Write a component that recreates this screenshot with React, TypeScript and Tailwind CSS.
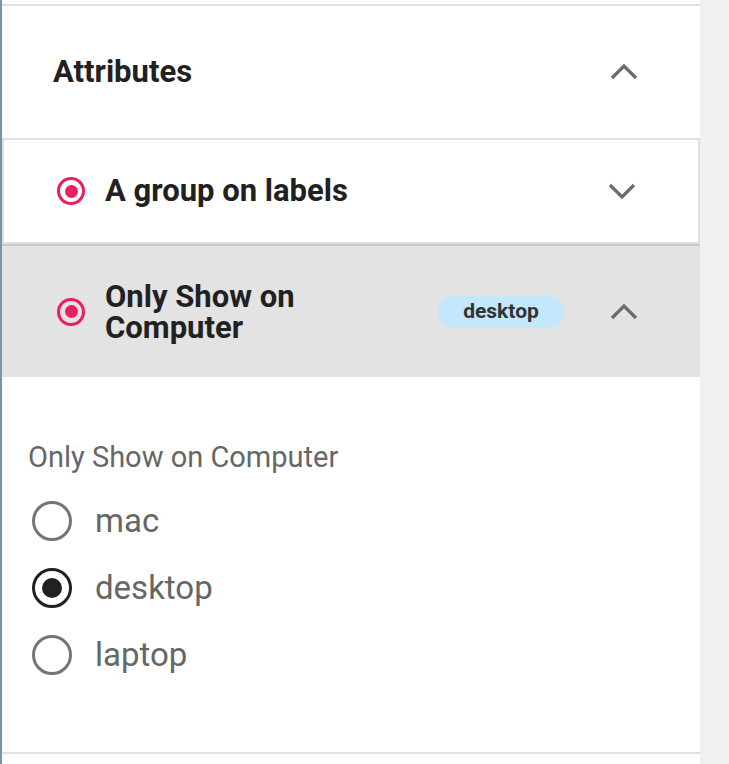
import React from 'react';

function Chevron({ up }: { up: boolean }) {
  return (
    <svg width="28" height="18" viewBox="0 0 28 18" className="shrink-0">
      <polyline
        points={up ? '2,15 14,3 26,15' : '2,3 14,15 26,3'}
        fill="none"
        stroke="#6b6b6b"
        strokeWidth="3.2"
      />
    </svg>
  );
}

function PinkDot() {
  return (
    <span className="flex h-[28px] w-[28px] shrink-0 items-center justify-center rounded-full border-[3px] border-[#e91e63]">
      <span className="h-[13px] w-[13px] rounded-full bg-[#e91e63]" />
    </span>
  );
}

function RadioRow({ label, checked }: { label: string; checked?: boolean }) {
  return (
    <div className="flex h-[67px] items-center">
      <span
        className={`ml-[30px] flex h-[40px] w-[40px] shrink-0 items-center justify-center rounded-full border-[3.5px] ${
          checked ? 'border-[#212121]' : 'border-[#757575]'
        }`}
      >
        {checked && <span className="h-[20px] w-[20px] rounded-full bg-[#212121]" />}
      </span>
      <span className="ml-[23px] text-[33px] text-[#666666]">{label}</span>
    </div>
  );
}

export default function App() {
  return (
    <div className="flex h-[764px] w-[729px] bg-[#f0f0f0] font-['Roboto',sans-serif]">
      <div className="w-[2px] bg-[#7895a8]" />
      <div className="flex w-[698px] flex-col bg-white pt-[4px]">
        <div className="h-[2px] bg-[#e0e0e0]" />

        <div className="flex h-[132px] items-center justify-between pl-[51px] pr-[62px]">
          <h2 className="text-[31px] font-bold text-[#212121]">Attributes</h2>
          <Chevron up />
        </div>

        <div className="flex h-[106px] items-center border-2 border-[#e0e0e0] pl-[53px] pr-[62px]">
          <PinkDot />
          <span className="ml-[20px] flex-1 text-[31px] font-bold text-[#212121]">A group on labels</span>
          <Chevron up={false} />
        </div>

        <div className="h-[2px] bg-[#c8c8c8]" />
        <div className="flex h-[131px] items-center bg-[#e3e3e3] pl-[55px] pr-[62px]">
          <PinkDot />
          <span className="ml-[20px] w-[220px] text-[31px] font-bold leading-[31px] text-[#212121]">
            Only Show on Computer
          </span>
          <div className="flex-1" />
          <span className="mr-[46px] flex h-[32px] w-[126px] items-center justify-center rounded-full bg-[#c4e8fb] text-[21px] font-bold text-[#333333]">
            desktop
          </span>
          <Chevron up />
        </div>

        <div className="flex flex-1 flex-col pt-[63px]">
          <div className="ml-[26px] h-[34px] text-[29px] leading-[34px] text-[#666666]">Only Show on Computer</div>
          <div className="mt-[13px]">
            <RadioRow label="mac" />
            <RadioRow label="desktop" checked />
            <RadioRow label="laptop" />
          </div>
          <div className="flex-1" />
          <div className="mb-[10px] h-[2px] bg-[#e0e0e0]" />
        </div>
      </div>
    </div>
  );
}
